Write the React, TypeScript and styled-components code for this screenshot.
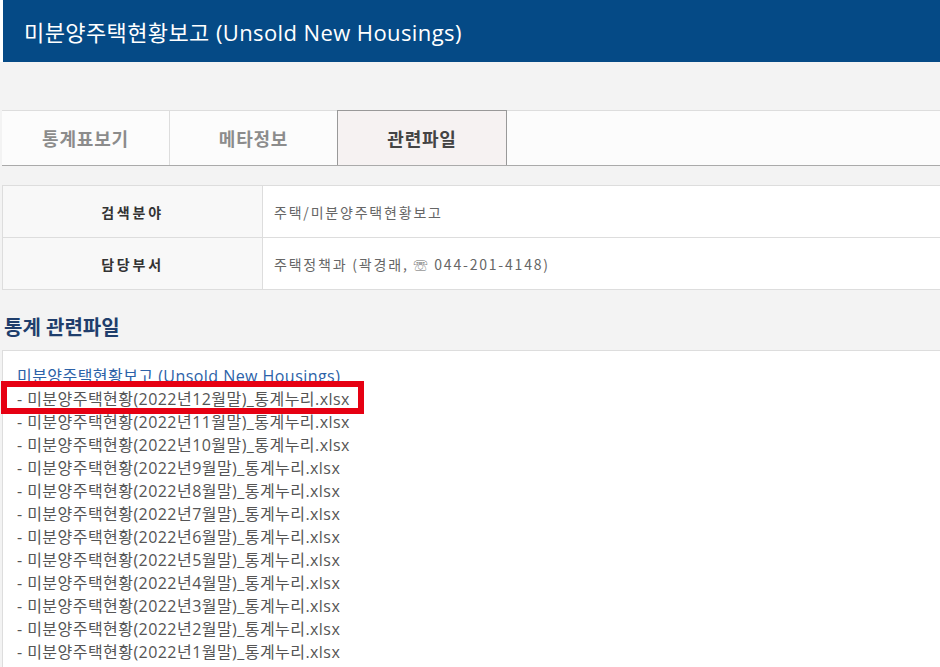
import React from 'react'
import styled, { createGlobalStyle } from 'styled-components'

const GlobalStyle = createGlobalStyle`
  html, body {
    margin: 0;
    padding: 0;
    background: #f3f3f3;
    font-family: "Open Sans", "Noto Sans CJK KR", sans-serif;
  }
  *, *::before, *::after { box-sizing: border-box; }
`

const months = [12, 11, 10, 9, 8, 7, 6, 5, 4, 3, 2, 1]

const App = () => {
  return (
    <Page>
      <GlobalStyle />
      <HeaderWrap>
        <Header>
          <h1>미분양주택현황보고 (Unsold New Housings)</h1>
        </Header>
      </HeaderWrap>

      <TabBar>
        <Tab>통계표보기</Tab>
        <Tab>메타정보</Tab>
        <Tab active>관련파일</Tab>
      </TabBar>

      <InfoTable>
        <InfoRow>
          <Label>검색분야</Label>
          <Value>주택/미분양주택현황보고</Value>
        </InfoRow>
        <InfoRow>
          <Label>담당부서</Label>
          <Value>주택정책과 (곽경래, ☏ 044-201-4148)</Value>
        </InfoRow>
      </InfoTable>

      <SectionTitle>통계 관련파일</SectionTitle>

      <FileBox>
        <GroupTitle>미분양주택현황보고 (Unsold New Housings)</GroupTitle>
        {months.map((m, i) => (
          <FileItem key={m} marked={i === 0}>
            - 미분양주택현황(2022년{m}월말)_통계누리.xlsx
          </FileItem>
        ))}
      </FileBox>
    </Page>
  )
}

const Page = styled.div`
  width: 940px;
  height: 667px;
  overflow: hidden;
`

const HeaderWrap = styled.div`
  background: #ffffff;
  padding-left: 3px;
`

const Header = styled.div`
  height: 62px;
  background: #054a86;
  display: flex;
  align-items: center;
  padding-left: 21px;
  h1 {
    margin: 0;
    color: #ffffff;
    font-size: 22px;
    font-weight: 400;
    letter-spacing: 0.4px;
  }
`

const TabBar = styled.div`
  margin: 48px 0 0 2px;
  height: 56px;
  display: flex;
  background: #fcfcfc;
  border-top: 1px solid #dddddd;
  border-bottom: 1px solid #aaaaaa;
`

const Tab = styled.div<{ active?: boolean }>`
  width: ${p => (p.active ? '170px' : '168px')};
  display: flex;
  align-items: center;
  justify-content: center;
  font-size: 18px;
  font-weight: 700;
  letter-spacing: 0.8px;
  color: ${p => (p.active ? '#444444' : '#8c8c8c')};
  background: ${p => (p.active ? '#f6f2f2' : '#fcfcfc')};
  border-right: 1px solid ${p => (p.active ? '#999999' : '#dddddd')};
  border-left: ${p => (p.active ? '1px solid #999999' : 'none')};
  border-top: ${p => (p.active ? '1px solid #999999' : 'none')};
  margin-top: ${p => (p.active ? '-1px' : '0')};
  margin-left: ${p => (p.active ? '-1px' : '0')};
`

const InfoTable = styled.div`
  margin: 19px 0 0 2px;
  border-top: 1px solid #dddddd;
  border-left: 1px solid #dddddd;
  background: #ffffff;
  font-family: "Noto Sans CJK KR", sans-serif;
`

const InfoRow = styled.div`
  display: flex;
  height: 52px;
  border-bottom: 1px solid #dddddd;
`

const Label = styled.div`
  width: 260px;
  flex-shrink: 0;
  background: #f8f8f8;
  border-right: 1px solid #dddddd;
  display: flex;
  align-items: center;
  justify-content: center;
  font-size: 14px;
  font-weight: 700;
  letter-spacing: 2.8px;
  color: #333333;
`

const Value = styled.div`
  display: flex;
  align-items: center;
  padding-left: 11px;
  font-size: 14px;
  letter-spacing: 1.8px;
  color: #666666;
`

const SectionTitle = styled.h2`
  margin: 0;
  padding: 22px 0 0 4px;
  height: 60px;
  font-size: 20px;
  font-weight: 700;
  color: #1f3e6c;
`

const FileBox = styled.div`
  margin-left: 2px;
  background: #ffffff;
  border-top: 1px solid #dddddd;
  border-left: 1px solid #dddddd;
  padding: 14px 0 0 14px;
  height: 400px;
`

const GroupTitle = styled.div`
  font-size: 16px;
  letter-spacing: 0.45px;
  line-height: 23px;
  height: 23px;
  color: #2c62a8;
`

const FileItem = styled.div<{ marked?: boolean }>`
  position: relative;
  font-size: 16px;
  letter-spacing: 0.45px;
  line-height: 23px;
  height: 23px;
  color: #555555;
  ${p =>
    p.marked &&
    `
    &::after {
      content: '';
      position: absolute;
      left: -16px;
      top: -7px;
      width: 363px;
      height: 33px;
      border: 6px solid #e60012;
    }
  `}
`

export default App
